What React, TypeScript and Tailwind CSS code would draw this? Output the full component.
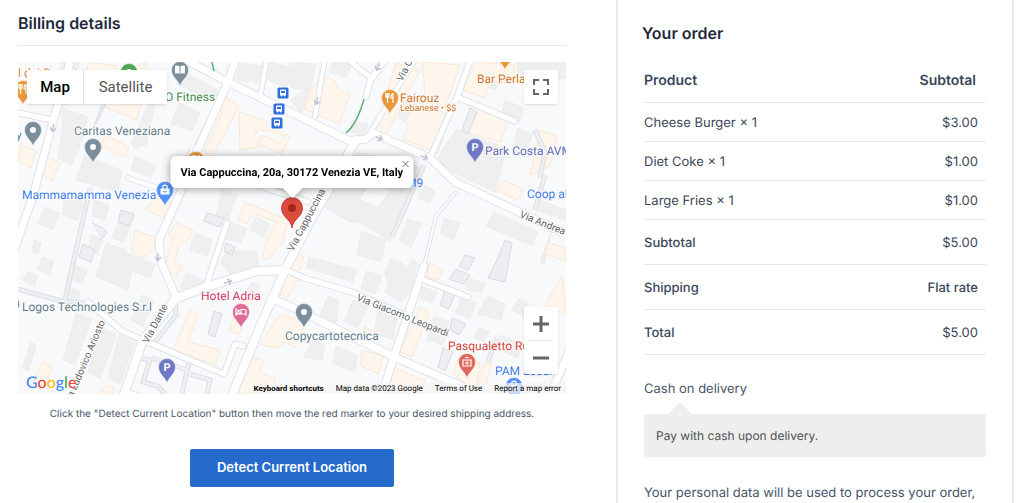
import type { ReactNode } from 'react'

interface OrderItem {
  name: string
  quantity: number
  price: string
}

const items: OrderItem[] = [
  { name: 'Cheese Burger', quantity: 1, price: '$3.00' },
  { name: 'Diet Coke', quantity: 1, price: '$1.00' },
  { name: 'Large Fries', quantity: 1, price: '$1.00' },
]

const totals = [
  { label: 'Subtotal', value: '$5.00' },
  { label: 'Shipping', value: 'Flat rate', strong: true },
  { label: 'Total', value: '$5.00' },
]

// Grey footprints
const buildings = [
  'M62 62L50 100L66 105L80 62Z',
  'M62 108L88 117L82 140L70 162L58 158L62 130Z',
  'M66 140L80 147L72 164L62 161Z',
  'M155 105L146 145L134 148L131 143L150 100Z',
  'M240 63L262 66L258 82L236 80Z',
  'M258 76L286 87L300 70L270 62Z',
  'M179 102L200 113L192 131L171 124Z',
  'M188 74L228 95L222 104L176 84Z',
  'M135 156L156 166L151 178L131 170Z',
  'M85 155L122 171L118 192L76 180Z',
  'M290 62L316 64L310 90L290 88Z',
  'M290 100L312 86L318 93L312 104L300 112Z',
  'M333 62L352 64L346 78L329 72Z',
  'M352 120L368 124L365 137L350 131Z',
  'M402 95L416 100L409 124L399 118Z',
  'M456 129L506 148L496 193L434 163Z',
  'M517 62L566 63L566 78L545 82L517 72Z',
  'M480 64L502 77L496 90L470 81Z',
  'M505 100L524 108L520 122L500 116Z',
  'M518 128L533 134L524 157L512 151Z',
  'M330 184L357 152L424 168L398 222L391 242L360 222L350 222L322 206Z',
  'M425 185L435 191L430 203L417 198Z',
  'M408 219L422 223L411 247L399 240Z',
  'M444 218L460 223L454 240L440 234Z',
  'M494 212L538 232L532 246L486 226Z',
  'M361 231L386 240L381 262L357 255Z',
  'M309 257L357 270L353 282L306 268Z',
  'M390 258L402 262L406 270L412 259L418 262L410 293L400 302L385 292L388 283L385 273Z',
  'M366 271L382 276L375 294L361 289Z',
  'M328 296L339 300L336 325L318 320Z',
  'M353 300L368 306L358 328L344 321Z',
  'M378 311L397 318L393 340L374 333Z',
  'M420 286L437 292L433 303L420 299Z',
  'M461 298L476 303L470 319L455 313Z',
  'M488 296L505 304L501 320L477 314Z',
  'M518 299L529 303L524 316L512 310Z',
  'M434 316L449 322L443 345L427 340Z',
  'M479 327L490 332L484 342L473 337Z',
  'M336 346L358 356L354 372L332 363Z',
  'M313 340L325 345L322 360L303 357Z',
  'M465 277L485 283L482 293L466 290Z',
  'M500 335L522 344L518 358L498 350Z',
  'M540 200L566 210L566 221L538 211Z',
  'M540 262L552 230L544 265Z',
  'M44 207L59 213L53 230L38 224Z',
  'M65 195L83 202L78 221L62 214Z',
  'M34 240L41 243L38 255L32 252Z',
  'M43 257L54 261L50 275L37 269Z',
  'M28 272L38 276L35 286L22 280Z',
  'M94 200L109 205L105 220L92 216Z',
  'M106 243L126 250L124 257L134 261L128 290L96 277Z',
  'M126 253L155 264L150 278L120 267Z',
  'M91 234L103 240L97 254L88 250Z',
  'M75 265L87 270L82 284L72 280Z',
  'M70 287L80 291L78 304L65 301Z',
  'M142 295L154 301L143 327L131 320Z',
  'M122 212L135 216L131 224L124 242L112 238Z',
  'M195 233L212 240L207 256L189 250Z',
  'M230 222L247 229L241 243L226 239Z',
  'M256 217L270 224L264 237L250 230Z',
  'M224 256L226 250L256 251L260 270L232 276L220 263Z',
  'M186 273L204 280L199 292L180 288Z',
  'M252 282L260 286L253 298L245 294Z',
  'M76 313L92 319L75 365L63 360Z',
  'M99 327L117 334L100 378L88 372Z',
  'M119 334L135 343L120 384L108 378Z',
  'M31 342L36 345L29 371L22 368Z',
  'M222 190L237 195L228 220L216 217Z',
]

// Cream blocks for shops and public places
const shops = [
  'M89 62L117 66L109 96L82 90Z',
  'M118 75L146 62L144 90L137 120L103 106Z',
  'M105 135L129 147L125 157L101 146Z',
  'M47 157L60 163L52 181L42 175Z',
  'M20 145L36 150L31 168L18 162Z',
  'M220 93L239 106L212 158L204 152L222 112L218 110L202 147L195 143Z',
  'M239 112L268 122L266 132L258 129L254 137L264 146L240 150Z',
  'M270 127L290 136L282 154L258 144L262 135L280 143L284 136L268 131Z',
  'M322 75L335 81L338 89L350 94L339 124L304 109L309 94Z',
  'M396 63L420 70L386 135L376 130Z',
  'M416 102L438 110L450 115L438 153L403 139L409 127L404 122Z',
  'M422 62L460 65L445 108L426 103Z',
  'M476 62L515 65L512 84L490 80L485 98L463 90Z',
  'M480 109L508 121L500 142L466 132Z',
  'M540 130L557 136L550 166L530 175Z',
  'M503 180L523 189L518 200L498 191Z',
  'M548 242L566 249L566 261L545 254Z',
  'M429 263L443 270L438 280L427 277Z',
  'M180 172L190 148L177 178L167 198L175 218L165 219L145 209Z',
  'M135 230L157 238L150 253L140 258L131 251Z',
  'M177 222L193 231L188 240L180 244L174 262L183 266L177 276L164 270L170 247L173 238L168 234Z',
  'M245 202L288 220L282 244L268 260L262 257L268 236L276 222L254 213L246 224L238 219Z',
  'M190 310L198 315L188 342L220 350L216 365L173 350Z',
  'M239 302L251 300L239 335L229 331Z',
  'M290 252L304 256L295 285L284 304L279 301Z',
  'M280 314L306 322L295 348L285 342L277 348L260 344Z',
  'M253 356L264 361L260 372L275 379L270 394L238 394Z',
  'M362 350L383 356L379 374L361 366Z',
  'M420 307L429 312L412 357L400 352Z',
  'M364 326L374 332L369 340L362 336Z',
  'M395 368L425 381L423 394L387 394Z',
  'M460 355L480 363L475 394L453 373Z',
  'M484 362L492 364L483 394L476 391Z',
  'M42 362L52 366L46 385L32 385Z',
  'M105 385L115 388L112 394L100 394Z',
  'M562 275L566 315L545 306Z',
]

const outlines = [
  'M105 95L96 121Q93 126 97 123L108 98',
  'M207 213L224 218L220 227L204 221Z',
  'M121 210L134 214L129 226L118 222Z',
  'M92 223L103 228L107 232L101 240',
  'M83 244L95 250L91 262L79 257Z',
  'M226 243L235 247L232 255L224 251Z',
  'M214 311L222 314L215 337L208 334Z',
  'M456 269L470 275L463 284L449 279Z',
  'M465 255L475 258L468 270L459 266Z',
  'M505 240L512 243L505 282L488 278L497 260Z',
  'M445 290L455 294L449 309L440 305Z',
  'M452 318L466 324L459 335L450 330Z',
  'M443 348L453 352L445 371L438 367Z',
  'M470 108L477 112L468 134L462 130Z',
]

const roads = [
  { d: 'M72 55L54 118L33 196L14 250', w: 7 },
  { d: 'M14 112L52 120', w: 5 },
  { d: 'M180 57L228 82L292 113L350 141L366 139L373 133L430 158L455 182L570 236', w: 7 },
  { d: 'M237 55L228 82L195 156L180 193L159 240L161 262L176 297', w: 7 },
  { d: 'M267 58L260 98', w: 4 },
  { d: 'M325 58L315 117', w: 4 },
  { d: 'M346 58L371 78L366 97', w: 5 },
  { d: 'M386 58L372 78', w: 6 },
  { d: 'M416 58L370 133', w: 4 },
  { d: 'M471 58L457 97L430 158', w: 5 },
  { d: 'M457 97L514 121', w: 5 },
  { d: 'M356 140L335 178L308 225L285 270L262 322L230 400', w: 8 },
  { d: 'M128 178L170 192', w: 4 },
  { d: 'M225 174L308 202', w: 5 },
  { d: 'M227 223L206 286', w: 5 },
  { d: 'M122 400L143 340L176 298L206 287L257 271L286 270', w: 8 },
  { d: 'M286 270L304 278L352 292L414 319', w: 5 },
  { d: 'M88 302L122 331L190 360L224 374L235 344L243 346', w: 5 },
  { d: 'M271 298L300 311L394 357L480 394', w: 7 },
  { d: 'M424 266L394 357L380 400', w: 7 },
  { d: 'M424 280L468 297', w: 5 },
  { d: 'M424 266L436 216L456 192', w: 2 },
  { d: 'M570 349L548 400', w: 7 },
  { d: 'M126 392L150 400', w: 5 },
]

const lanes = [
  'M90 188L64 304',
  'M14 288L61 301L88 303',
  'M175 300L176 315L155 342',
  'M140 358L150 360L143 382L158 386L165 394',
  'M152 358L187 370L190 361',
  'M187 370L182 394M190 374L210 380L207 394',
  'M392 237L424 165',
  'M497 338L488 362',
  'M545 175L535 210M535 130L545 152L540 178',
]

// [x, y, rotation] of the one-way arrows
const arrows = [
  [53, 128, 100],
  [158, 257, 92],
  [228, 282, -20],
  [378, 67, 115],
  [317, 101, 102],
  [379, 138, 25],
  [424, 157, 25],
]

function Pin({ x, y, color, children }: { x: number; y: number; color: string; children?: ReactNode }) {
  return (
    <g transform={`translate(${x} ${y})`}>
      <path
        d="M0 16C-1 11 -8.500 7 -8.500 0A8.500 8.500 0 1 1 8.500 0C8.500 7 1 11 0 16Z"
        fill={color}
        stroke="#fff"
        strokeWidth={0.5}
      />
      {children ?? <circle r={3} fill="#fff" />}
    </g>
  )
}

const fork = (
  <path
    d="M-4 -5V-1.500Q-4 0 -2.500 0V5M-1 -5V-1.500Q-1 0 -2.500 0V-5M3 5V-4.500Q1 -4 1 0H3"
    fill="none"
    stroke="#fff"
    strokeWidth={1.2}
  />
)

const bag = (
  <g>
    <rect x={-4.500} y={-1.500} width={9} height={6} rx={0.8} fill="#fff" />
    <path d="M-2.300 -1V-2.500A2.300 2.300 0 0 1 2.300 -2.500V-1" fill="none" stroke="#fff" strokeWidth={1.2} />
    <path d="M-2 1Q0 3.500 2 1" fill="none" stroke="#5491f5" strokeWidth={1} />
  </g>
)

function BusStop({ x, y }: { x: number; y: number }) {
  return (
    <g transform={`translate(${x} ${y})`}>
      <rect x={-5.500} y={-5.500} width={11} height={11} rx={1.500} fill="#2f6fe0" />
      <path d="M-3 -2.500Q-3 -3.500 -2 -3.500H2Q3 -3.500 3 -2.500V2.500H2V3.500H1V2.500H-1V3.500H-2V2.500H-3Z" fill="#fff" />
      <path d="M-2 -2H2V0H-2Z" fill="#2f6fe0" />
    </g>
  )
}

function StreetMap() {
  return (
    <svg
      viewBox="18 62 548 332"
      preserveAspectRatio="xMidYMid slice"
      className="block h-full w-full font-['Roboto',sans-serif]"
      role="img"
      aria-label="Map of Via Cappuccina, Venezia"
    >
      <rect x={-500} y={-200} width={1600} height={900} fill="#f7f9fb" />
      <g fill="#efeff0" stroke="#e9e9eb" strokeWidth={0.6}>
        {buildings.map((d) => <path key={d} d={d} />)}
      </g>
      {/* Courtyard */}
      <path d="M371 182L391 190L378 208L359 199Z" fill="#f7f9fb" stroke="#e9e9eb" />
      <g fill="#fef6ec" stroke="#f9e3ca" strokeWidth={0.8}>
        {shops.map((d) => <path key={d} d={d} />)}
      </g>
      <g fill="#eceef1" stroke="#d8dbe0" strokeWidth={1}>
        {outlines.map((d) => <path key={d} d={d} />)}
      </g>
      <g fill="none" stroke="#dcdfe4">
        {lanes.map((d) => <path key={d} d={d} strokeWidth={5} />)}
      </g>
      <g fill="none" stroke="#edeff2">
        {lanes.map((d) => <path key={d} d={d} strokeWidth={3} />)}
      </g>
      {/* Road casings first so the crossings stay open */}
      <g fill="none" stroke="#dfe2ea" strokeLinecap="round" strokeLinejoin="round">
        {roads.map(({ d, w }) => <path key={d} d={d} strokeWidth={w + 2} />)}
      </g>
      <g fill="none" stroke="#fff" strokeLinecap="round" strokeLinejoin="round">
        {roads.map(({ d, w }) => <path key={d} d={d} strokeWidth={w} />)}
      </g>
      <path d="M364 99Q357 124 346 133M212 62L214 71" fill="none" stroke="#5bb075" strokeWidth={1.5} />
      {arrows.map(([x, y, r]) => (
        <path
          key={`${x}-${y}`}
          d="M-4 0H3M0 -3L3.500 0L0 3"
          transform={`translate(${x} ${y}) rotate(${r})`}
          fill="none"
          stroke="#bfc2d6"
          strokeWidth={1.5}
        />
      ))}

      <Pin x={33} y={130} color="#7a8e9b" />
      <Pin x={93} y={147} color="#7a8e9b" />
      <Pin x={304} y={312} color="#7a8e9b" />
      <Pin x={11} y={304} color="#7a8e9b" />
      <Pin x={180} y={70} color="#7a8e9b">
        <path d="M-5 -4Q-2 -5 -0.500 -3.500V4Q-2 3 -5 3.500ZM5 -4Q2 -5 0.500 -3.500V4Q2 3 5 3.500Z" fill="#fff" />
      </Pin>
      <Pin x={129} y={72} color="#4fa65b" />
      <Pin x={23} y={89} color="#e8973a">{fork}</Pin>
      <Pin x={390} y={98} color="#e8973a">{fork}</Pin>
      <Pin x={196} y={160} color="#e8973a">{fork}</Pin>
      <Pin x={505} y={54} color="#e8973a">{fork}</Pin>
      <Pin x={165} y={190} color="#5491f5">{bag}</Pin>
      <Pin x={514} y={386} color="#5491f5">{bag}</Pin>
      <Pin x={241} y={312} color="#df6b97">
        <path d="M-5 -4V4M-5 2H5V4M5 2V-1Q5 -2.500 3.500 -2.500H0V1H-5" fill="none" stroke="#fff" strokeWidth={1.2} />
        <circle cx={-2.500} cy={-1.300} r={1.300} fill="#fff" />
      </Pin>
      <Pin x={467} y={362} color="#e0675c">
        <path d="M-4 -2H4V4H-4ZM-2 -4.500H2M0 -0.800V2.800M-1.800 1H1.800" fill="none" stroke="#fff" strokeWidth={1.2} />
      </Pin>
      <Pin x={475} y={147} color="#6f78c4">
        <text y={4} textAnchor="middle" fill="#fff" className="text-[11px] font-bold">P</text>
      </Pin>
      <Pin x={167} y={367} color="#6f78c4">
        <text y={4} textAnchor="middle" fill="#fff" className="text-[11px] font-bold">P</text>
      </Pin>
      <BusStop x={283} y={93} />
      <BusStop x={279} y={109} />
      <BusStop x={277} y={123} />

      {/* Place names */}
      <g stroke="#fff" strokeWidth={2} strokeLinejoin="round" className="text-[12px] [paint-order:stroke]">
        <text x={18} y={77} fill="#d9853a">l dei Sapori</text>
        <text x={165} y={101} fill="#3f8b46">O Fitness</text>
        <text x={16} y={139} fill="#627b8c">y</text>
        <text x={74} y={135} fill="#627b8c">Caritas Veneziana</text>
        <text x={22} y={199} fill="#3b7be8">Mammamamma Venezia</text>
        <text x={22} y={311} fill="#627b8c">Logos Technologies S.r.l</text>
        <text x={201} y={300} fill="#d3396e">Hotel Adria</text>
        <text x={285} y={340} fill="#627b8c">Copycartotecnica</text>
        <text x={477} y={83} fill="#cf7327">Bar Perla</text>
        <text x={400} y={102} fill="#cf7327">Fairouz</text>
        <text x={400} y={111} fill="#cf7327" className="text-[9px]">Lebanese • $$</text>
        <text x={485} y={155} fill="#5f68b4">Park Costa AVM</text>
        <text x={406} y={187} fill="#3b7be8">M9</text>
        <text x={527} y={198} fill="#3b7be8">Coop alleanza</text>
        <text x={448} y={350} fill="#cf3f3b">Pasqualetto Rug</text>
        <text x={495} y={375} fill="#3b7be8">PAM Local</text>
      </g>
      {/* Street names */}
      <g
        fill="#5c5f63"
        stroke="#fff"
        strokeWidth={2}
        strokeLinejoin="round"
        className="text-[10px] [paint-order:stroke]"
      >
        <text transform="translate(293 252) rotate(-62)">Via Cappuccina</text>
        <text transform="translate(148 344) rotate(-62)">Via Dante</text>
        <text transform="translate(73 398) rotate(-67)">a Ludovico Ariosto</text>
        <text transform="translate(356 300) rotate(22)">Via Giacomo Leopardi</text>
        <text transform="translate(519 217) rotate(22)">Via Andrea Costa</text>
        <text transform="translate(402 82) rotate(-62)">Via Cappuccina</text>
      </g>

      {/* Selected address */}
      <g transform="translate(292 208)">
        <path
          d="M0 20C-1 11 -10.500 9 -10.500 0A10.500 10.500 0 1 1 10.500 0C10.500 9 1 11 0 20Z"
          fill="#dd4b3e"
          stroke="#b93127"
          strokeWidth={0.8}
        />
        <circle r={4} fill="#a52719" />
      </g>
    </svg>
  )
}

function GoogleLogo() {
  return (
    <a
      href="#google-maps"
      aria-label="Google"
      className="absolute bottom-0 left-2 font-['Lato',sans-serif] text-[16px] leading-[22px] font-medium text-[#4285f4] [text-shadow:0_0_2px_#fff,0_0_2px_#fff]"
    >
      G<span className="text-[#ea4335]">o</span>
      <span className="text-[#fbbc05]">o</span>g<span className="text-[#34a853]">l</span>
      <span className="text-[#ea4335]">e</span>
    </a>
  )
}

function LocationMap() {
  return (
    <div className="relative h-[332px] overflow-hidden font-['Roboto',sans-serif]">
      <StreetMap />

      {/* Map type */}
      <div className="absolute top-2 left-[9px] flex h-[34px] bg-white text-[15px] shadow-sm">
        <button className="w-[57px] border-r border-gray-200 font-medium text-black">Map</button>
        <button className="w-[83px] text-[#565656]">Satellite</button>
      </div>

      <button
        aria-label="Toggle fullscreen view"
        className="absolute top-2 right-2 flex size-[34px] items-center justify-center rounded-xs bg-white shadow-sm"
      >
        <svg viewBox="0 0 16 16" className="size-4" fill="none" stroke="#666" strokeWidth="2">
          <path d="M1 6V1H6M10 1H15V6M15 10V15H10M6 15H1V10" />
        </svg>
      </button>

      {/* Zoom */}
      <div className="absolute right-2 bottom-5 flex w-[34px] flex-col items-center rounded-xs bg-white shadow-sm">
        <button aria-label="Zoom in" className="flex h-[33px] w-full items-center justify-center">
          <svg viewBox="0 0 16 16" className="size-4" stroke="#666" strokeWidth="3">
            <path d="M0 8H16M8 0V16" />
          </svg>
        </button>
        <div className="h-px w-6 bg-gray-200" />
        <button aria-label="Zoom out" className="flex h-[33px] w-full items-center justify-center">
          <svg viewBox="0 0 16 16" className="size-4" stroke="#666" strokeWidth="3">
            <path d="M0 8H16" />
          </svg>
        </button>
      </div>

      {/* Info window above the marker */}
      <div className="absolute top-[94px] left-1/2 flex h-8 w-[243px] -translate-x-1/2 items-center rounded-md bg-white px-[10px] drop-shadow-[0_1px_4px_rgba(0,0,0,0.4)]">
        <p className="pt-[2px] text-[11px] font-bold whitespace-nowrap text-black">
          Via Cappuccina, 20a, 30172 Venezia VE, Italy
        </p>
        <button aria-label="Close" className="absolute top-1 right-1">
          <svg viewBox="0 0 8 8" className="size-2" stroke="#666" strokeWidth="1">
            <path d="M1 1L7 7M7 1L1 7" />
          </svg>
        </button>
        <svg viewBox="0 0 20 10" className="absolute top-full left-1/2 h-[10px] w-5 -translate-x-1/2" fill="#fff">
          <path d="M0 0H20L10 10Z" />
        </svg>
      </div>

      <GoogleLogo />
      <div className="absolute right-0 bottom-0 flex h-[11px] items-center gap-3 bg-[#f5f5f5]/70 px-[5px] text-[8px] whitespace-nowrap text-black">
        <button className="font-bold">Keyboard shortcuts</button>
        <span>Map data ©2023 Google</span>
        <a href="#terms">Terms of Use</a>
        <a href="#report">Report a map error</a>
      </div>
    </div>
  )
}

function BillingDetails() {
  return (
    <section className="min-w-0 flex-1 pt-[11px] pl-[18px]">
      <h2 className="border-b border-[#e2e8f0] pb-[10px] text-[16px] leading-6 font-semibold text-[#1e293b]">
        Billing details
      </h2>
      <div className="pt-4">
        <LocationMap />
      </div>
      <p className="pt-3 text-center text-[10px] leading-4 text-[#475569]">
        Click the "Detect Current Location" button then move the red marker to your desired shipping address.
      </p>
      <div className="flex justify-center pt-[27px]">
        <button className="h-[38px] w-[204px] rounded-xs bg-[#266bcb] text-[13px] font-semibold text-white">
          Detect Current Location
        </button>
      </div>
    </section>
  )
}

function OrderSummary() {
  return (
    <aside className="w-[398px] shrink-0 border-x-2 border-[#e2e8f0] pr-[26px] pl-6 text-[13px]">
      <h2 className="pt-[21px] text-[16px] leading-6 font-semibold text-[#1e293b]">Your order</h2>
      <div className="pt-[13px] pl-[2px]">
        <table className="w-full border-separate border-spacing-0 text-[#3b475a]">
          <thead className="text-[14px]">
            <tr className="h-[45px]">
              <th scope="col" className="border-b border-[#e8ebf1] text-left font-semibold">Product</th>
              <th scope="col" className="border-b border-[#e8ebf1] pr-[10px] text-right font-semibold">Subtotal</th>
            </tr>
          </thead>
          <tbody>
            {items.map((item) => (
              <tr key={item.name} className="h-[39px]">
                <td className="border-b border-[#e2e8f0] pt-1">
                  {item.name} × {item.quantity}
                </td>
                <td className="border-b border-[#e2e8f0] pt-1 pr-2 text-right">{item.price}</td>
              </tr>
            ))}
          </tbody>
          <tfoot>
            {totals.map((row) => (
              <tr key={row.label} className="h-[45px]">
                <th scope="row" className="border-b border-[#e2e8f0] pt-1 text-left font-medium">{row.label}</th>
                <td className={`border-b border-[#e2e8f0] pt-1 pr-2 text-right ${row.strong ? 'font-medium' : ''}`}>
                  {row.value}
                </td>
              </tr>
            ))}
          </tfoot>
        </table>

        {/* Payment method */}
        <h3 className="pt-6 leading-5 text-[#475569]">Cash on delivery</h3>
        <svg viewBox="0 0 24 12" className="mt-[3px] ml-6 block h-3 w-6" fill="#eee">
          <path d="M12 0L24 12H0Z" />
        </svg>
        <p className="rounded-xs bg-[#eee] px-3 py-3 text-[12px] leading-[19px] text-[#515151]">
          Pay with cash upon delivery.
        </p>
        <p className="pt-[26px] leading-5 text-[#475569]">
          Your personal data will be used to process your order,
        </p>
      </div>
    </aside>
  )
}

export default function App() {
  return (
    <main className="flex min-h-screen gap-[50px] bg-white pr-[10px] font-['Inter',sans-serif] [text-rendering:geometricPrecision]">
      <BillingDetails />
      <OrderSummary />
    </main>
  )
}
